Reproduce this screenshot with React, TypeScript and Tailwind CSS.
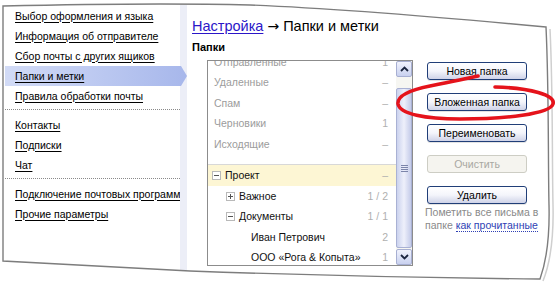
import React from 'react';

type Folder = {
  name: string;
  count: string;
  system?: boolean;
  indent: number;
  box?: 'plus' | 'minus';
  active?: boolean;
};

const systemFolders: Folder[] = [
  { name: 'Отправленные', count: '1', system: true, indent: 6 },
  { name: 'Удаленные', count: '–', system: true, indent: 6 },
  { name: 'Спам', count: '–', system: true, indent: 6 },
  { name: 'Черновики', count: '1', system: true, indent: 6 },
  { name: 'Исходящие', count: '–', system: true, indent: 6 },
];

const userFolders: Folder[] = [
  { name: 'Проект', count: '–', indent: 4, box: 'minus', active: true },
  { name: 'Важное', count: '1 / 2', indent: 18, box: 'plus' },
  { name: 'Документы', count: '1 / 1', indent: 18, box: 'minus' },
  { name: 'Иван Петрович', count: '2', indent: 43 },
  { name: 'ООО «Рога & Копыта»', count: '1', indent: 43 },
];

const TreeBox = ({ kind }: { kind: 'plus' | 'minus' }) => (
  <svg width="9" height="9" viewBox="0 0 9 9" className="mr-[4px] shrink-0">
    <rect x="0.5" y="0.5" width="8" height="8" fill="#fff" stroke="#b9b9b9" />
    <path d="M2 4.5 H7" stroke="#555" />
    {kind === 'plus' && <path d="M4.5 2 V7" stroke="#555" />}
  </svg>
);

const FolderRow = ({ f }: { f: Folder }) => (
  <div
    className={`h-[20.5px] flex items-center justify-between pr-[8px] ${f.active ? 'bg-[#fdf6d4]' : ''}`}
    style={{ paddingLeft: f.indent }}
  >
    <div className="flex items-center whitespace-nowrap">
      {f.box && <TreeBox kind={f.box} />}
      <span className={f.system ? 'text-[#9c9c9c]' : 'text-[#111]'}>{f.name}</span>
    </div>
    <span className="text-[#b0b0b0]">{f.count}</span>
  </div>
);

const MenuLink = ({ label, active }: { label: string; active?: boolean }) => (
  <div
    className={
      active
        ? 'relative z-10 h-[20px] w-[182px] flex items-center pl-[10px] bg-linear-to-r from-[#d2dbf6] to-[#a7b7eb] [clip-path:polygon(0_0,176px_0,182px_50%,176px_100%,0_100%)]'
        : 'h-[20px] flex items-center pl-[10px] overflow-hidden whitespace-nowrap'
    }
  >
    <a className="text-black underline underline-offset-[2px] whitespace-nowrap">{label}</a>
  </div>
);

const Button = ({ label, disabled }: { label: string; disabled?: boolean }) => (
  <div
    className={
      disabled
        ? 'h-[18px] w-[100px] flex items-center justify-center rounded-[3px] border border-[#cdcdc4] bg-[#f5f4ef] text-[#a9a8a2]'
        : 'h-[18px] w-[100px] flex items-center justify-center rounded-[3px] border border-[#203e78] bg-linear-to-b from-white via-[#f4f5fb] to-[#cfd3e8] text-black shadow-[0_1px_0_#e3e3e3]'
    }
  >
    {label}
  </div>
);

const ScrollArrow = ({ up }: { up?: boolean }) => (
  <div className="h-[16px] rounded-[2px] border border-[#a7afd2] bg-linear-to-b from-[#f1f3fd] to-[#c9d1ef] flex items-center justify-center">
    <svg width="9" height="6" viewBox="0 0 9 6">
      <path d={up ? 'M1 5 L4.5 1.5 L8 5' : 'M1 1 L4.5 4.5 L8 1'} fill="none" stroke="#1c2640" strokeWidth="1.8" />
    </svg>
  </div>
);

const App = () => {
  return (
    <div className="relative w-[560px] h-[288px] bg-white overflow-hidden font-['Liberation_Sans',Arial,sans-serif] text-[10.5px] leading-[13px]">
      <div className="flex mt-[5px] h-[266px]">
        {/* left menu */}
        <div className="ml-[5px] w-[175px] pt-[1px]">
          <MenuLink label="Выбор оформления и языка" />
          <MenuLink label="Информация об отправителе" />
          <MenuLink label="Сбор почты с других ящиков" />
          <MenuLink label="Папки и метки" active />
          <MenuLink label="Правила обработки почты" />
          <div className="mt-[3px] mb-[5px] border-t border-dotted border-[#8a8a8a]" />
          <MenuLink label="Контакты" />
          <MenuLink label="Подписки" />
          <MenuLink label="Чат" />
          <div className="mt-[3px] mb-[5px] border-t border-dotted border-[#8a8a8a]" />
          <MenuLink label="Подключение почтовых программ" />
          <MenuLink label="Прочие параметры" />
        </div>
        <div className="w-[7px] bg-[#eceef7]" />

        {/* settings */}
        <div className="pl-[5px] flex flex-col">
          <div className="mt-[12px] h-[18px] text-[14.5px] leading-[18px] text-black whitespace-nowrap">
            <a className="text-[#2b16c8] underline underline-offset-[2px]">Настройка</a>{' '}
            <span className="font-['DejaVu_Sans',sans-serif] text-[14px]">→</span> Папки и метки
          </div>
          <div className="mt-[6px] font-bold text-[11px] text-black">Папки</div>

          <div className="mt-[6px] ml-[15px] flex">
            <div className="w-[206px] h-[206px] border border-[#8c8c8c] flex">
              <div className="flex-1 overflow-hidden">
                <div className="mt-[-9.25px]">
                  <div className="pb-[10px] border-b border-[#d8d8d8]">
                    {systemFolders.map((f) => (
                      <FolderRow key={f.name} f={f} />
                    ))}
                  </div>
                  {userFolders.map((f) => (
                    <FolderRow key={f.name} f={f} />
                  ))}
                </div>
              </div>
              <div className="w-[16px] flex flex-col bg-[#f6f6f2]">
                <ScrollArrow up />
                <div className="h-[11px]" />
                <div className="flex-1 rounded-[2px] border border-[#a9b1d4] bg-linear-to-r from-[#cbd2ee] via-[#eef0fb] to-[#c4cbe9] flex flex-col items-center justify-center gap-[1px]">
                  <div className="w-[7px] h-[1px] bg-[#7c85aa]" />
                  <div className="w-[7px] h-[1px] bg-[#7c85aa]" />
                  <div className="w-[7px] h-[1px] bg-[#7c85aa]" />
                  <div className="w-[7px] h-[1px] bg-[#7c85aa]" />
                </div>
                <div className="h-[1px]" />
                <ScrollArrow />
              </div>
            </div>

            <div className="ml-[14px] mt-[2px] flex flex-col">
              <div className="flex flex-col gap-[13px]">
                <Button label="Новая папка" />
                <Button label="Вложенная папка" />
                <Button label="Переименовать" />
                <Button label="Очистить" disabled />
                <Button label="Удалить" />
              </div>
              <div className="mt-[2px] ml-[-2px] w-[125px] text-[#8a8a8a] leading-[13px]">
                Пометить все письма в папке{' '}
                <span className="text-[#2e3fb4] border-b border-dotted border-[#2e3fb4]">как прочитанные</span>
              </div>
            </div>
          </div>
        </div>
      </div>

      {/* torn paper outline */}
      <svg className="absolute inset-0 pointer-events-none" width="560" height="288" viewBox="0 0 560 288">
        <path
          d="M550,29 C553,90 552,160 553,205 C554,245 549,266 543,281"
          fill="none"
          stroke="#cfcfcf"
          strokeWidth="1.5"
        />
        <path
          d="M3,6 C90,4 170,3 250,5 C350,9 460,19 546,27 C549,90 548,160 549,205 C550,245 545,265 540,279 C430,278 300,275 190,271 C110,267 50,263 3,261 Z"
          fill="none"
          stroke="#7d7d7d"
          strokeWidth="1.4"
        />
      </svg>

      {/* hand drawn highlight */}
      <svg className="absolute inset-0 pointer-events-none" width="560" height="288" viewBox="0 0 560 288">
        <path
          d="M495,87 C530,88 556,95 553,104 C550,114 505,119 460,119 C425,119 400,114 398,104 C397,96 410,90 430,86 C450,82 465,79 478,76"
          fill="none"
          stroke="#e5131b"
          strokeWidth="3.6"
          strokeLinecap="round"
        />
      </svg>
    </div>
  );
};

export default App;
